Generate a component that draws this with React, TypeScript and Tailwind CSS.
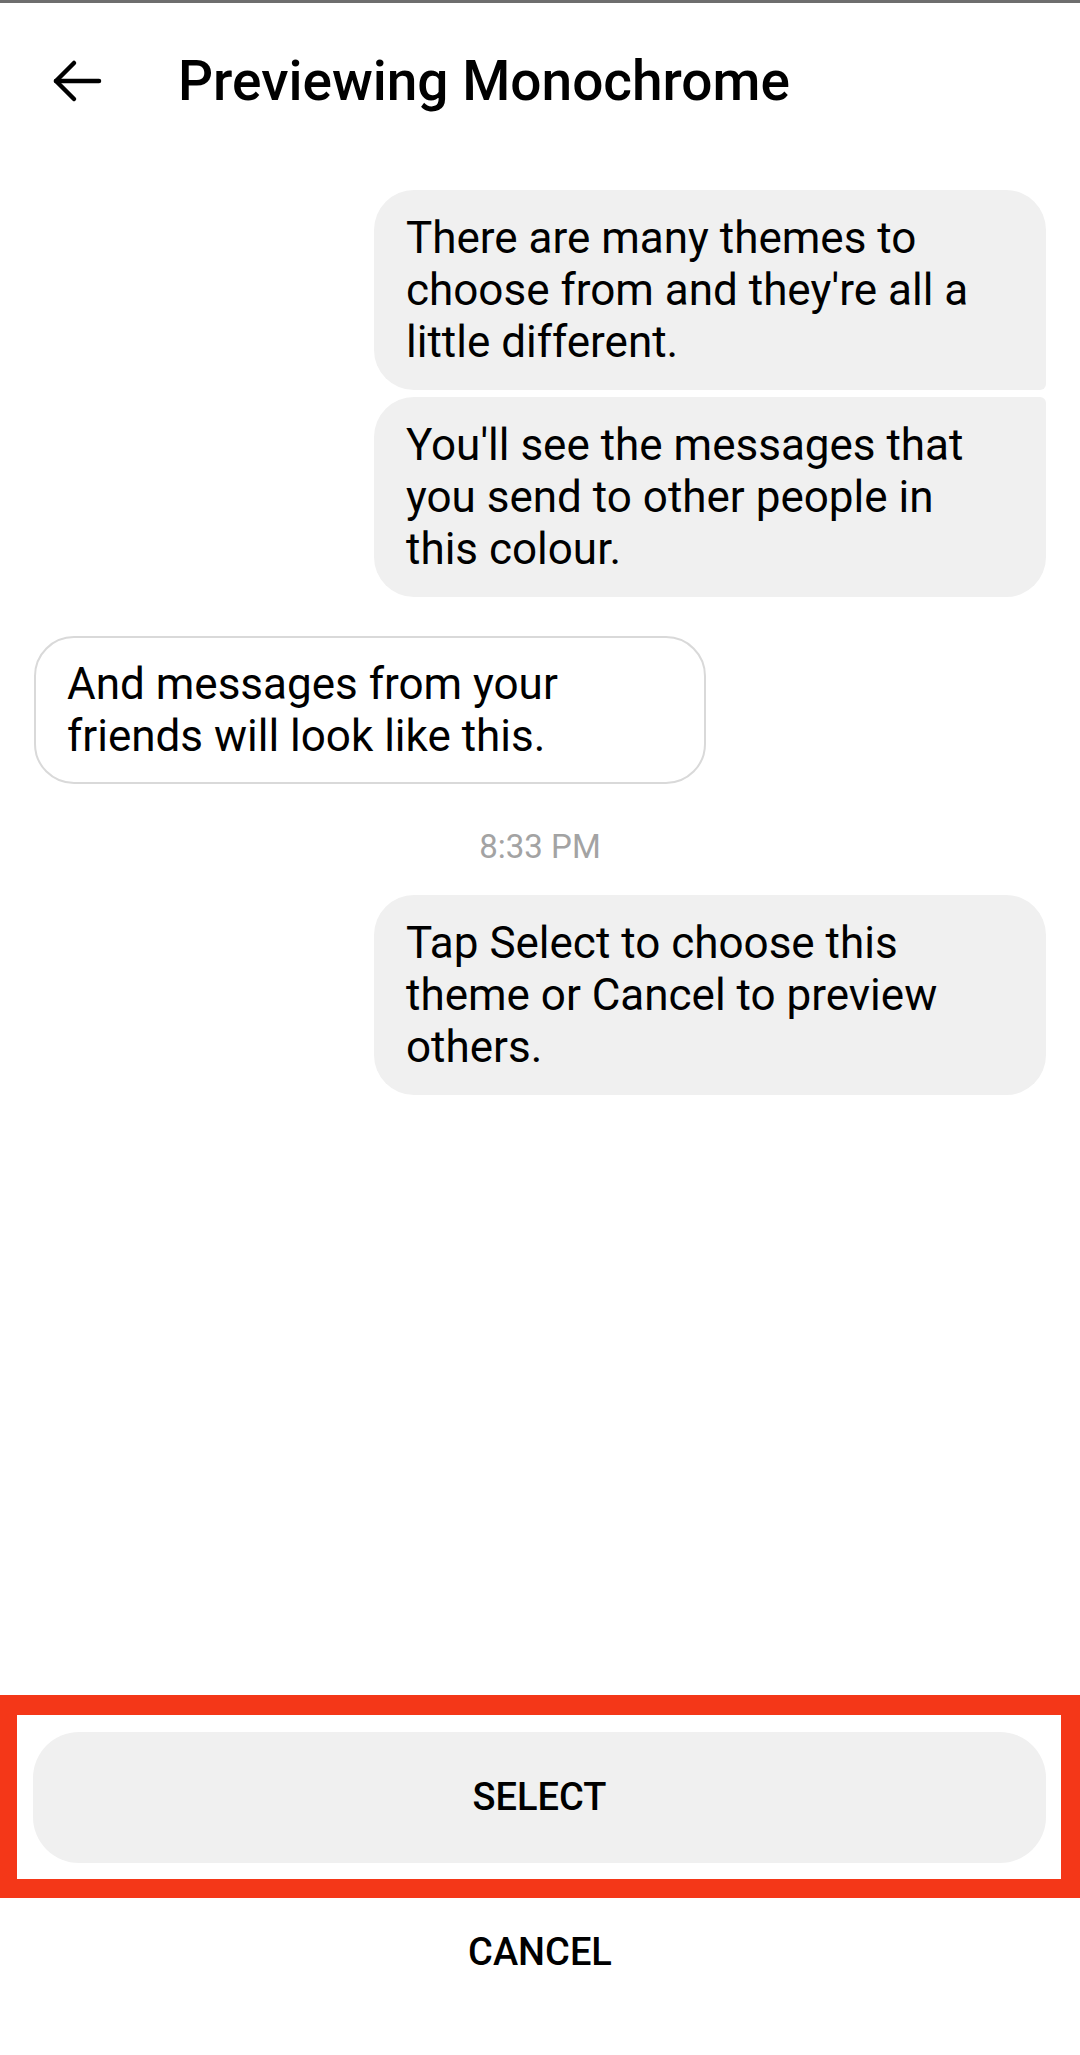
import React from "react"

function BackArrow() {
  return (
    <svg width="50" height="44" viewBox="0 0 50 44" fill="none" stroke="currentColor" strokeWidth="4.5" strokeLinecap="round" strokeLinejoin="round">
      <path d="M47 22H4" />
      <path d="M22 4L4 22L22 40" />
    </svg>
  )
}

const bubbleText = "text-[44px] leading-[52px] text-black"

export default function App() {
  return (
    <div className="w-[1080px] h-[2055px] flex flex-col bg-white font-['Roboto',_'Liberation_Sans',_sans-serif] border-t-[3px] border-[#6e6e6e]">
      {/* header */}
      <div className="h-[156px] flex items-center pl-[52px] text-black">
        <BackArrow />
        <h1 className="ml-[76px] text-[55px] leading-[60px] font-medium">Previewing Monochrome</h1>
      </div>

      {/* thread */}
      <div className="flex flex-col pt-[31px]">
        <div className={`self-end mr-[34px] w-[672px] bg-[#f0f0f0] px-[32px] py-[22px] rounded-[40px] rounded-br-[6px] ${bubbleText}`}>
          There are many themes to choose from and they're all a little different.
        </div>
        <div className={`self-end mr-[34px] mt-[7px] w-[672px] bg-[#f0f0f0] px-[32px] py-[22px] rounded-[40px] rounded-tr-[6px] ${bubbleText}`}>
          You'll see the messages that you send to other people in this colour.
        </div>

        <div className={`self-start ml-[34px] mt-[39px] w-[672px] border-2 border-[#d9d9d9] px-[31px] py-[20px] rounded-[40px] ${bubbleText}`}>
          And messages from your friends will look like this.
        </div>

        <div className="mt-[45px] text-center text-[33px] leading-[36px] text-[#a3a3a3]">8:33 PM</div>

        <div className={`self-end mr-[34px] mt-[30px] w-[672px] bg-[#f0f0f0] px-[32px] py-[22px] rounded-[40px] ${bubbleText}`}>
          Tap Select to choose this theme or Cancel to preview others.
        </div>
      </div>

      {/* actions */}
      <div className="mt-auto flex flex-col">
        <div className="border-t-[20px] border-b-[19px] border-l-[17px] border-r-[19px] border-[#f43718] pt-[17px] pb-[16px] pl-[16px] pr-[15px]">
          <button className="w-full h-[131px] rounded-[46px] bg-[#f0f0f0] text-[38px] font-medium text-black">
            SELECT
          </button>
        </div>
        <div className="h-[157px] pt-[32px] text-center">
          <button className="text-[38px] leading-[44px] font-medium text-black">CANCEL</button>
        </div>
      </div>
    </div>
  )
}
